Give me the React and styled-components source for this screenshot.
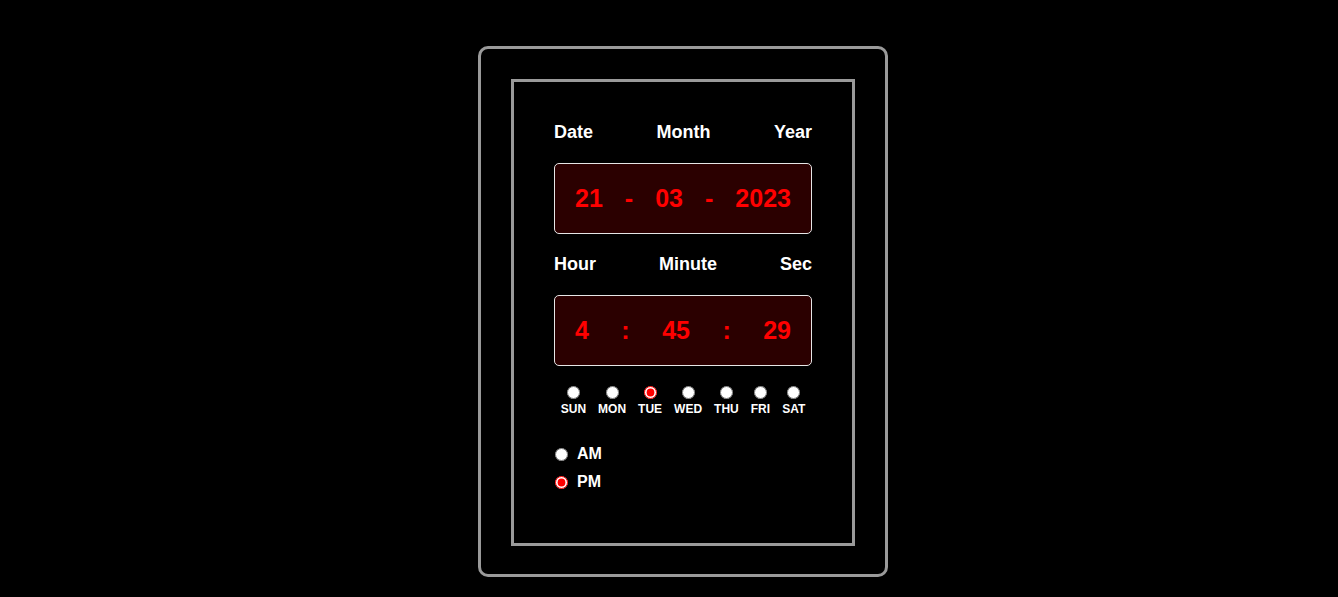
import styled, { createGlobalStyle } from "styled-components";

const GlobalStyle = createGlobalStyle`
  body {
    margin: 0;
    background: #000;
    font-family: "Liberation Sans", Arial, sans-serif;
  }
`

const Page = styled.div`
  display: flex;
  justify-content: center;
  padding: 46px 0 0 28px;
  min-height: 597px;
  box-sizing: border-box;
`

const OuterFrame = styled.div`
  width: 410px;
  height: 531px;
  box-sizing: border-box;
  border: 3px solid #9a9a9a;
  border-radius: 10px;
  padding: 30px;
`

const InnerFrame = styled.div`
  height: 467px;
  box-sizing: border-box;
  border: 3px solid #9a9a9a;
  padding: 40px 40px 0;
  display: flex;
  flex-direction: column;
`

const LabelRow = styled.div`
  display: flex;
  justify-content: space-between;
  color: #fff;
  font-weight: bold;
  font-size: 18px;
  line-height: 20px;
  margin-bottom: ${p => p.gap}px;
`

const Display = styled.div`
  height: 71px;
  box-sizing: border-box;
  border: 1px solid #e6e6e6;
  border-radius: 5px;
  background: #2b0000;
  padding: 0 20px;
  display: flex;
  justify-content: space-between;
  align-items: center;
  color: #ff0000;
  font-weight: bold;
  font-size: 25px;
  margin-bottom: ${p => p.gap}px;
`

const Days = styled.div`
  display: flex;
  justify-content: center;
  gap: 12px;
  margin-bottom: 28px;
`

const Day = styled.label`
  display: flex;
  flex-direction: column;
  align-items: center;
  gap: 3px;
  color: #fff;
  font-weight: bold;
  font-size: 12px;
  line-height: 14px;
`

const Radio = styled.input.attrs({ type: "radio", readOnly: true })`
  width: 13px;
  height: 13px;
  margin: 0;
  accent-color: #ff0000;
`

const Meridiem = styled.div`
  display: flex;
  flex-direction: column;
  gap: 8px;
  padding-left: 1px;
`

const MeridiemItem = styled.label`
  display: flex;
  align-items: center;
  gap: 9px;
  color: #fff;
  font-weight: bold;
  font-size: 16px;
  line-height: 20px;
`

const days = ["SUN", "MON", "TUE", "WED", "THU", "FRI", "SAT"];

export default function App() {
  let today = "TUE";
  let pm = true;

  return (
    <>
      <GlobalStyle />
      <Page>
        <OuterFrame>
          <InnerFrame>
            <LabelRow gap={21}>
              <span>Date</span>
              <span>Month</span>
              <span>Year</span>
            </LabelRow>
            <Display gap={20}>
              <span>21</span>
              <span>-</span>
              <span>03</span>
              <span>-</span>
              <span>2023</span>
            </Display>
            <LabelRow gap={21}>
              <span>Hour</span>
              <span>Minute</span>
              <span>Sec</span>
            </LabelRow>
            <Display gap={20}>
              <span>4</span>
              <span>:</span>
              <span>45</span>
              <span>:</span>
              <span>29</span>
            </Display>
            <Days>
              {days.map(d => (
                <Day key={d}>
                  <Radio name="day" checked={d == today} />
                  {d}
                </Day>
              ))}
            </Days>
            <Meridiem>
              <MeridiemItem>
                <Radio name="ampm" checked={!pm} />
                AM
              </MeridiemItem>
              <MeridiemItem>
                <Radio name="ampm" checked={pm} />
                PM
              </MeridiemItem>
            </Meridiem>
          </InnerFrame>
        </OuterFrame>
      </Page>
    </>
  )
}
